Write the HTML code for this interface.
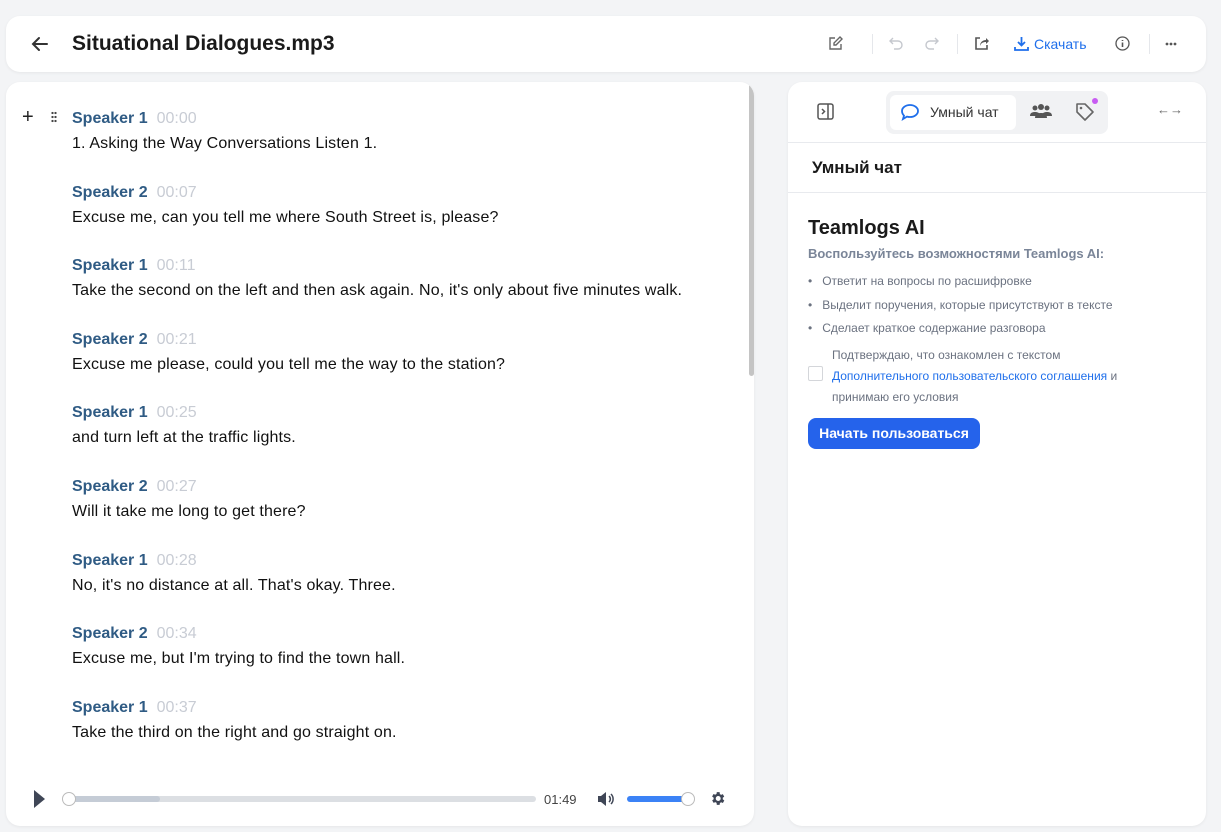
<!DOCTYPE html>
<html><head><meta charset="utf-8"><style>
*{box-sizing:border-box;margin:0;padding:0}
body{width:1221px;height:832px;background:#f3f4f6;font-family:"Liberation Sans",sans-serif;position:relative;overflow:hidden;color:#111}
.card{position:absolute;background:#fff;border-radius:14px;box-shadow:0 1px 3px rgba(0,0,0,.06)}
.hdr{left:6px;top:16px;width:1200px;height:56px}
.title{position:absolute;left:66px;top:16px;font-size:21px;font-weight:bold;color:#1a1a1a}
.ic{position:absolute}
.left{left:6px;top:82px;width:748px;height:744px;overflow:hidden}
.right{left:788px;top:82px;width:418px;height:744px}
.blk{position:absolute;left:66px;white-space:nowrap}
.sp{font-size:16px;font-weight:bold;color:#2f5b84}
.tm{font-size:16px;color:#c8ccd4;margin-left:9px}
.tx{font-size:16px;color:#111;margin-top:7px;letter-spacing:.15px}
.sb{position:absolute;left:743px;top:2px;width:5px;height:292px;background:#c4c4c4;border-radius:3px}
.ru{font-family:"Liberation Sans","DejaVu Sans",sans-serif}
</style></head><body>
<div class="card hdr">
 <svg class="ic" style="left:25px;top:20px" width="18" height="16" viewBox="0 0 18 16"><path d="M16 8H3M8 2L2 8l6 6" stroke="#333" stroke-width="2" fill="none" stroke-linecap="round"/></svg>
 <div class="title">Situational Dialogues.mp3</div>
 <svg class="ic" style="left:822px;top:20px" width="15" height="15" viewBox="0 0 15 15"><path d="M7 2H2v11h11V8M12 1l2 2-6 6H6V7z" stroke="#666" stroke-width="1.4" fill="none"/></svg>
 <div class="ic" style="left:866px;top:18px;width:1px;height:20px;background:#e5e7eb"></div>
 <svg class="ic" style="left:883px;top:20px" width="15" height="15" viewBox="0 0 15 15"><path d="M4 2L1 5l3 3M1 5h8a4 4 0 010 8H5" stroke="#c5c8ce" stroke-width="1.4" fill="none"/></svg>
 <svg class="ic" style="left:918px;top:20px" width="15" height="15" viewBox="0 0 15 15"><path d="M11 2l3 3-3 3M14 5H6a4 4 0 000 8h4" stroke="#c5c8ce" stroke-width="1.4" fill="none"/></svg>
 <div class="ic" style="left:951px;top:18px;width:1px;height:20px;background:#e5e7eb"></div>
 <svg class="ic" style="left:968px;top:20px" width="15" height="15" viewBox="0 0 15 15"><path d="M6 2H2v11h11V9" stroke="#555" stroke-width="1.6" fill="none"/><path d="M6 10c0-4 3-6 6-6V2l3 3-3 3V6c-3 0-5 1-6 4z" fill="#555"/></svg>
 <svg class="ic" style="left:1008px;top:20px" width="15" height="15" viewBox="0 0 15 15"><path d="M7.5 1v8M4 6l3.5 3.5L11 6" stroke="#1f6feb" stroke-width="1.8" fill="none"/><path d="M1 11v3h13v-3" stroke="#1f6feb" stroke-width="1.8" fill="none"/></svg>
 <div class="ic ru" style="left:1028px;top:20px;font-size:14px;color:#1f6feb">Скачать</div>
 <svg class="ic" style="left:1109px;top:20px" width="15" height="15" viewBox="0 0 15 15"><circle cx="7.5" cy="7.5" r="6.5" stroke="#555" stroke-width="1.3" fill="none"/><path d="M7.5 6.5v4.5M7.5 4v1" stroke="#555" stroke-width="1.6"/></svg>
 <div class="ic" style="left:1143px;top:18px;width:1px;height:20px;background:#e5e7eb"></div>
 <svg class="ic" style="left:1159px;top:26px" width="12" height="4" viewBox="0 0 12 4"><circle cx="2" cy="2" r="1.4" fill="#555"/><circle cx="6" cy="2" r="1.4" fill="#555"/><circle cx="10" cy="2" r="1.4" fill="#555"/></svg>
</div>

<div class="card left">
 <div class="ic" style="left:16px;top:24px;font-size:20px;color:#222">+</div>
 <div class="ic" style="left:45px;top:29px;width:6px;height:12px;background:radial-gradient(circle,#444 1px,transparent 1.3px) 0 0/3px 4px"></div>
 <div class="sb"></div>
 <div class="blk" style="top:28px"><span class="sp">Speaker 1</span><span class="tm">00:00</span><div class="tx">1. Asking the Way Conversations Listen 1.</div></div>
 <div class="blk" style="top:102px"><span class="sp">Speaker 2</span><span class="tm">00:07</span><div class="tx">Excuse me, can you tell me where South Street is, please?</div></div>
 <div class="blk" style="top:175px"><span class="sp">Speaker 1</span><span class="tm">00:11</span><div class="tx">Take the second on the left and then ask again. No, it's only about five minutes walk.</div></div>
 <div class="blk" style="top:249px"><span class="sp">Speaker 2</span><span class="tm">00:21</span><div class="tx">Excuse me please, could you tell me the way to the station?</div></div>
 <div class="blk" style="top:322px"><span class="sp">Speaker 1</span><span class="tm">00:25</span><div class="tx">and turn left at the traffic lights.</div></div>
 <div class="blk" style="top:396px"><span class="sp">Speaker 2</span><span class="tm">00:27</span><div class="tx">Will it take me long to get there?</div></div>
 <div class="blk" style="top:470px"><span class="sp">Speaker 1</span><span class="tm">00:28</span><div class="tx">No, it's no distance at all. That's okay. Three.</div></div>
 <div class="blk" style="top:543px"><span class="sp">Speaker 2</span><span class="tm">00:34</span><div class="tx">Excuse me, but I'm trying to find the town hall.</div></div>
 <div class="blk" style="top:617px"><span class="sp">Speaker 1</span><span class="tm">00:37</span><div class="tx">Take the third on the right and go straight on.</div></div>
 <svg class="ic" style="left:28px;top:708px" width="12" height="18" viewBox="0 0 12 18"><path d="M0 0L11 9 0 18z" fill="#3f4656"/></svg>
 <div class="ic" style="left:60px;top:714px;width:470px;height:6px;background:#dcdfe3;border-radius:3px"></div>
 <div class="ic" style="left:60px;top:714px;width:94px;height:6px;background:#c5ccd6;border-radius:3px"></div>
 <div class="ic" style="left:56px;top:710px;width:14px;height:14px;border-radius:50%;background:#fff;border:1px solid #bbb"></div>
 <div class="ic" style="left:538px;top:710px;font-size:13px;color:#444">01:49</div>
 <svg class="ic" style="left:591px;top:709px" width="18" height="16" viewBox="0 0 18 16"><path d="M1 5h3l5-4v14l-5-4H1z" fill="#3f4656"/><path d="M12 5a4 4 0 010 6M14 3a7 7 0 010 10" stroke="#3f4656" stroke-width="1.5" fill="none"/></svg>
 <div class="ic" style="left:621px;top:714px;width:62px;height:6px;background:#3b82f6;border-radius:3px"></div>
 <div class="ic" style="left:675px;top:710px;width:14px;height:14px;border-radius:50%;background:#fff;border:1px solid #bbb"></div>
 <svg class="ic" style="left:703px;top:708px" width="17" height="17" viewBox="0 0 24 24"><path fill="#3f4656" d="M19.4 13a7.8 7.8 0 000-2l2.1-1.6-2-3.5-2.5 1a7 7 0 00-1.7-1L15 3h-4l-.4 2.7a7 7 0 00-1.7 1l-2.5-1-2 3.5L6.6 11a7.8 7.8 0 000 2l-2.1 1.6 2 3.5 2.5-1a7 7 0 001.7 1L11 21h4l.4-2.7a7 7 0 001.7-1l2.5 1 2-3.5zM13 15.5a3.5 3.5 0 110-7 3.5 3.5 0 010 7z"/></svg>
</div>

<div class="card right ru">
 <svg class="ic" style="left:29px;top:21px" width="17" height="17" viewBox="0 0 17 17"><rect x="1" y="1" width="15" height="15" rx="2" stroke="#555" stroke-width="1.5" fill="none"/><path d="M11 1v15M5 6l2.5 2.5L5 11" stroke="#555" stroke-width="1.5" fill="none"/></svg>
 <div class="ic" style="left:98px;top:9px;width:222px;height:43px;background:#f1f2f4;border-radius:8px"></div>
 <div class="ic" style="left:102px;top:13px;width:126px;height:35px;background:#fff;border-radius:6px"></div>
 <svg class="ic" style="left:112px;top:21px" width="20" height="18" viewBox="0 0 20 18"><path d="M10 2c4.4 0 8 2.7 8 6s-3.6 6-8 6c-1 0-2-.1-3-.4L3 16l1-3.4C2.8 11.4 2 9.8 2 8c0-3.3 3.6-6 8-6z" stroke="#1f6feb" stroke-width="1.8" fill="none"/></svg>
 <div class="ic" style="left:142px;top:22px;font-size:14px;color:#333">Умный чат</div>
 <svg class="ic" style="left:242px;top:21px" width="22" height="16" viewBox="0 0 22 16"><circle cx="5" cy="5" r="2.5" fill="#555"/><circle cx="17" cy="5" r="2.5" fill="#555"/><circle cx="11" cy="4" r="3" fill="#555"/><path d="M0 13c0-3 2-4 5-4s5 1 5 4zM12 13c0-3 2-4 5-4s5 1 5 4z" fill="#555"/><path d="M5 15c0-4 3-5 6-5s6 1 6 5z" fill="#555"/></svg>
 <svg class="ic" style="left:287px;top:20px" width="20" height="20" viewBox="0 0 20 20"><path d="M2 2h8l8 8-8 8-8-8z" stroke="#666" stroke-width="1.6" fill="none" stroke-linejoin="round"/><circle cx="6" cy="6" r="1.3" fill="#666"/></svg>
 <div class="ic" style="left:304px;top:16px;width:6px;height:6px;border-radius:50%;background:#c85cf2"></div>
 <div class="ic" style="left:369px;top:20px;font-size:13px;color:#666">←→</div>
 <div class="ic" style="left:0;top:60px;width:418px;height:1px;background:#e8eaee"></div>
 <div class="ic" style="left:24px;top:76px;font-size:17px;font-weight:bold;color:#1a1a1a">Умный чат</div>
 <div class="ic" style="left:0;top:110px;width:418px;height:1px;background:#e8eaee"></div>
 <div class="ic" style="left:20px;top:135px;font-size:20px;font-weight:bold;color:#1a1a1a">Teamlogs AI</div>
 <div class="ic" style="left:20px;top:164px;font-size:13px;font-weight:bold;color:#7a8598">Воспользуйтесь возможностями Teamlogs AI:</div>
 <div class="ic" style="left:20px;top:188px;font-size:12px;color:#6b7280;line-height:23.5px">
  <div>•&nbsp;&nbsp;&nbsp;Ответит на вопросы по расшифровке</div>
  <div>•&nbsp;&nbsp;&nbsp;Выделит поручения, которые присутствуют в тексте</div>
  <div>•&nbsp;&nbsp;&nbsp;Сделает краткое содержание разговора</div>
 </div>
 <div class="ic" style="left:20px;top:284px;width:15px;height:15px;border:1px solid #d4d6da;border-radius:2px"></div>
 <div class="ic" style="left:44px;top:263px;font-size:12px;color:#6b7280;line-height:21px;width:330px">Подтверждаю, что ознакомлен с текстом<br><span style="color:#1f6feb">Дополнительного пользовательского соглашения</span> и<br>принимаю его условия</div>
 <div class="ic" style="left:20px;top:336px;width:172px;height:31px;background:#2563eb;border-radius:8px;color:#fff;font-size:14px;font-weight:bold;text-align:center;line-height:31px">Начать пользоваться</div>
</div>
</body></html>
